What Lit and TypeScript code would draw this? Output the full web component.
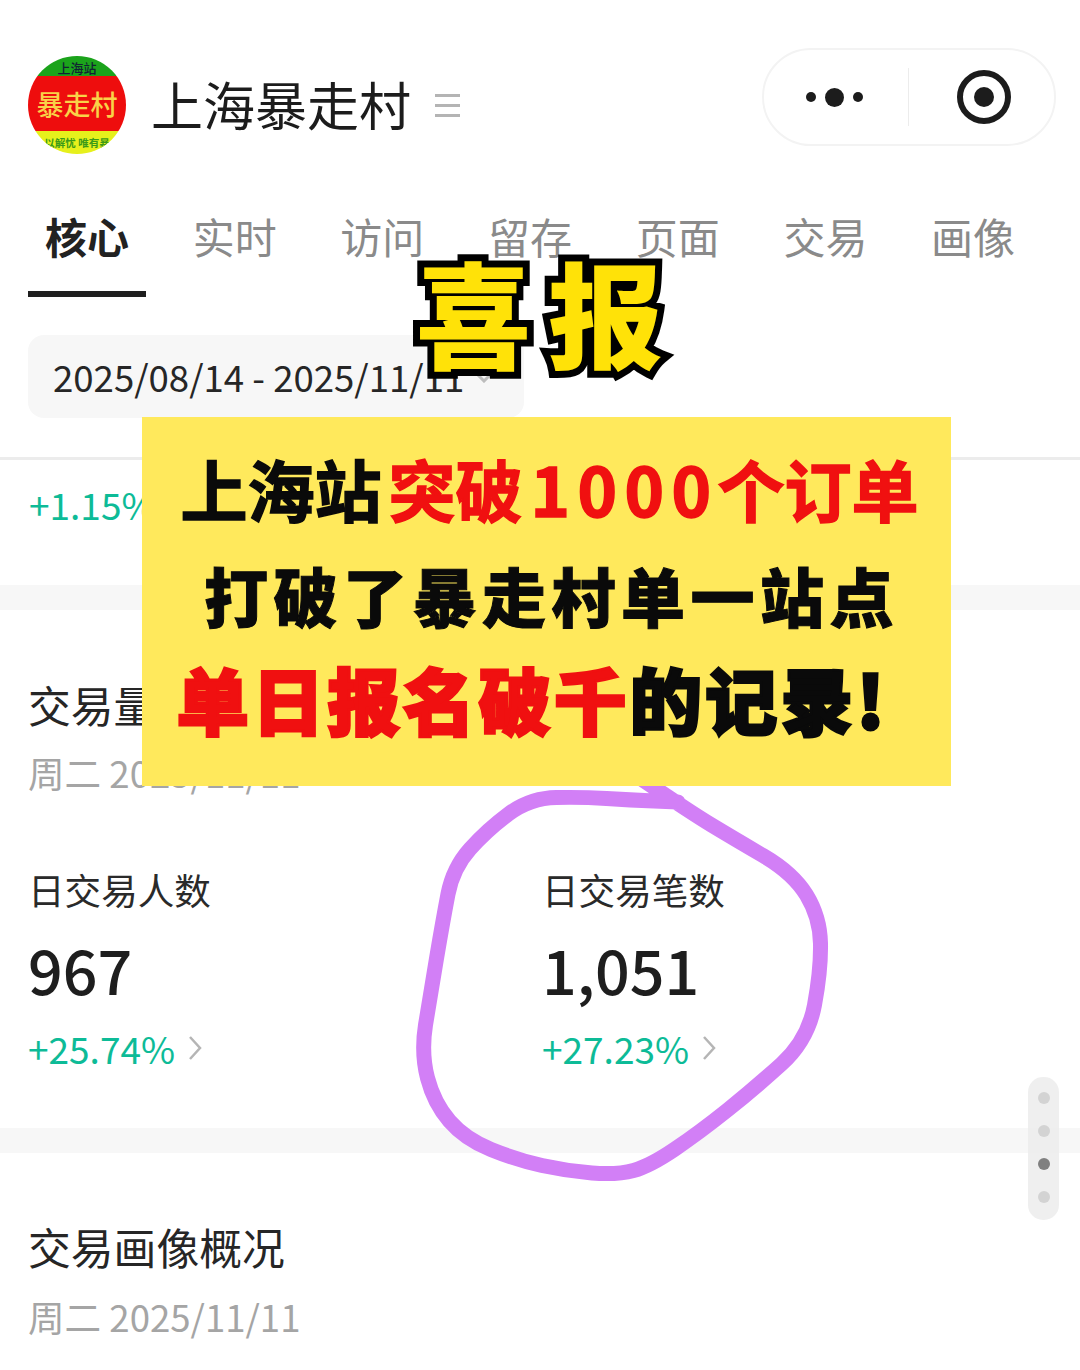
import { LitElement, html, css } from "lit";
import { customElement } from "lit/decorators.js";

const tabs = ["核心", "实时", "访问", "留存", "页面", "交易", "画像"];

const ringPoints: [number, number][] = [
  [640, 778], [690, 812], [733, 838], [793, 873], [820, 917], [821, 970], [808, 1040],
  [755, 1088], [700, 1132], [650, 1166], [617, 1175], [567, 1171], [517, 1160],
  [465, 1139], [434, 1103], [421, 1053], [430, 997], [443, 920], [453, 868],
  [487, 830], [530, 798], [583, 797], [630, 800], [678, 802],
];

function smoothPath(pts: [number, number][]): string {
  let d = `M${pts[0][0]} ${pts[0][1]}`;
  for (let i = 1; i < pts.length - 1; i++) {
    const mx = (pts[i][0] + pts[i + 1][0]) / 2;
    const my = (pts[i][1] + pts[i + 1][1]) / 2;
    d += ` Q${pts[i][0]} ${pts[i][1]} ${mx} ${my}`;
  }
  const last = pts[pts.length - 1];
  return d + ` L${last[0]} ${last[1]}`;
}

@customElement("app-root")
export class AppRoot extends LitElement {
  static styles = css`
    :host {
      display: block;
      position: relative;
      width: 1080px;
      height: 1370px;
      overflow: hidden;
      background: #fff;
      color: #222;
      font-family: "Noto Sans CJK SC", "Noto Sans", sans-serif;
    }
    .header {
      display: flex;
      align-items: center;
      height: 98px;
      margin-top: 48px;
      padding: 0 24px 0 28px;
    }
    .avatar {
      width: 98px;
      height: 98px;
      margin-top: 16px;
      border-radius: 50%;
      overflow: hidden;
      display: flex;
      flex-direction: column;
      flex: none;
      text-align: center;
      white-space: nowrap;
    }
    .av-top {
      height: 20px;
      background: #1ba31b;
      color: #123;
      font-size: 13px;
      line-height: 24px;
      font-weight: 500;
    }
    .av-mid {
      height: 55px;
      background: #ee0d0d;
      color: #f9d248;
      font-size: 27px;
      line-height: 55px;
      font-weight: 500;
    }
    .av-bot {
      height: 23px;
      background: #e6f01c;
      color: #3b9a18;
      font-size: 10.5px;
      line-height: 23px;
      font-weight: 700;
    }
    .title {
      margin: 14px 0 0 25px;
      font-size: 52px;
      line-height: 60px;
      color: #1c1c1c;
      white-space: nowrap;
    }
    .menu {
      margin: 16px 0 0 24px;
      width: 25px;
      display: flex;
      flex-direction: column;
      gap: 7px;
    }
    .menu i {
      display: block;
      height: 3px;
      background: #b4b4b4;
    }
    .capsule {
      margin-left: auto;
      width: 294px;
      height: 98px;
      box-sizing: border-box;
      border: 2px solid #f3f3f3;
      border-radius: 49px;
      display: grid;
      grid-template-columns: 146px 1fr;
      align-items: center;
      position: relative;
    }
    .dots {
      display: flex;
      align-items: center;
      justify-content: center;
      gap: 9px;
      margin-left: -5px;
    }
    .dots i {
      display: block;
      width: 10px;
      height: 10px;
      border-radius: 50%;
      background: #1c1c1c;
    }
    .dots i.big {
      width: 19px;
      height: 19px;
    }
    .target {
      justify-self: center;
      display: block;
      margin-left: 4px;
    }
    .sep {
      position: absolute;
      left: 144px;
      top: 18px;
      width: 1px;
      height: 58px;
      background: #ececec;
    }
    .tabs {
      display: grid;
      grid-template-columns: repeat(7, 147.7px);
      margin-top: 59px;
      padding-left: 13px;
      height: 90px;
    }
    .tab {
      font-size: 42px;
      line-height: 62px;
      text-align: center;
      color: #8a8a8a;
      width: 118px;
      position: relative;
      margin-left: 15px;
      box-sizing: border-box;
      white-space: nowrap;
    }
    .tab.on {
      color: #222;
      font-weight: 700;
    }
    .tab.on::after {
      content: "";
      position: absolute;
      left: 0;
      right: 0;
      top: 86px;
      height: 6px;
      background: #1f1f1f;
    }
    .date {
      margin: 40px 0 0 28px;
      width: 496px;
      height: 83px;
      border-radius: 16px;
      background: #f7f7f7;
      box-sizing: border-box;
      padding-left: 25px;
      display: flex;
      align-items: center;
      gap: 10px;
      font-size: 36.6px;
      color: #262626;
      white-space: nowrap;
    }
    .shadow {
      margin-top: 39px;
      height: 3px;
      background: #ececec;
    }
    .pct {
      display: flex;
      align-items: center;
      gap: 13px;
      color: #0dbb97;
      font-size: 37px;
      line-height: 48px;
      white-space: nowrap;
    }
    .first {
      margin: 20px 0 0 29px;
    }
    .band {
      height: 25px;
      background: #f7f7f7;
    }
    .b1 {
      margin-top: 57px;
    }
    .section {
      padding: 69px 28px 0;
    }
    .h2 {
      font-size: 42.8px;
      line-height: 50px;
      color: #262626;
      white-space: nowrap;
    }
    .sub {
      margin-top: 19px;
      font-size: 36.6px;
      line-height: 50px;
      color: #a5a5a5;
      white-space: nowrap;
    }
    .metrics {
      display: grid;
      grid-template-columns: 514px 1fr;
      margin-top: 70px;
    }
    .m-label {
      font-size: 36.6px;
      line-height: 44px;
      color: #2a2a2a;
      white-space: nowrap;
    }
    .m-value {
      font-size: 61px;
      line-height: 70px;
      margin-top: 22px;
      color: #1e1e1e;
      font-weight: 500;
    }
    .m-pct {
      margin-top: 20px;
    }
    .b2 {
      margin-top: 56px;
    }
    .sec2 {
      padding-top: 68px;
    }
    .sec2 .sub {
      margin-top: 21px;
    }
    .scroll {
      position: absolute;
      left: 1028px;
      top: 1077px;
      width: 31px;
      height: 143px;
      border-radius: 15px;
      background: rgba(236, 236, 236, 0.85);
      display: flex;
      flex-direction: column;
      align-items: center;
      gap: 21px;
      padding-top: 15px;
      box-sizing: border-box;
    }
    .scroll i {
      display: block;
      width: 12px;
      height: 12px;
      border-radius: 50%;
      background: #d3d3d3;
    }
    .scroll i.cur {
      background: #808080;
    }
    .ring {
      position: absolute;
      left: 0;
      top: 0;
      pointer-events: none;
    }
    .headline {
      position: absolute;
      left: 416px;
      top: 225px;
      font-size: 115px;
      line-height: 170px;
      font-weight: 900;
      letter-spacing: 17px;
      color: #ffe208;
      -webkit-text-stroke: 14px #000;
      paint-order: stroke fill;
      white-space: nowrap;
    }
    .banner {
      position: absolute;
      left: 142px;
      top: 417px;
      width: 809px;
      height: 369px;
      background: #ffe95c;
      display: flex;
      flex-direction: column;
      align-items: center;
      padding-top: 18px;
      box-sizing: border-box;
      color: #0a0a0a;
      font-weight: 900;
      white-space: nowrap;
    }
    .l {
      font-size: 67px;
      line-height: 105px;
      -webkit-text-stroke: 1px currentColor;
    }
    .l1 {
      margin-left: 6px;
      font-weight: 700;
      -webkit-text-stroke: 1.5px currentColor;
    }
    .digits {
      letter-spacing: 7.5px;
      margin: 0 -1px 0 8px;
    }
    .gap {
      margin-left: 7px;
    }
    .l2 {
      letter-spacing: 5.5px;
      font-size: 64px;
      margin: 2px 0 -2px 10px;
    }
    .l3 {
      font-size: 72px;
      letter-spacing: 3.5px;
      -webkit-text-stroke: 3px currentColor;
      margin-left: -28px;
    }
    .red {
      color: #f01010;
    }
  `;

  render() {
    return html`
      <div class="header">
        <div class="avatar">
          <div class="av-top">上海站</div>
          <div class="av-mid">暴走村</div>
          <div class="av-bot">以解忧 唯有暴</div>
        </div>
        <div class="title">上海暴走村</div>
        <div class="menu"><i></i><i></i><i></i></div>
        <div class="capsule">
          <div class="dots"><i></i><i class="big"></i><i></i></div>
          <div class="sep"></div>
          <svg class="target" width="54" height="54" viewBox="0 0 54 54">
            <circle cx="27" cy="27" r="24" fill="none" stroke="#1c1c1c" stroke-width="6"></circle>
            <circle cx="27" cy="27" r="10" fill="#1c1c1c"></circle>
          </svg>
        </div>
      </div>

      <div class="tabs">
        ${tabs.map((t, i) => html`<div class="tab ${i === 0 ? "on" : ""}">${t}</div>`)}
      </div>

      <div class="date">
        <span>2025/08/14 - 2025/11/11</span>
        <svg width="20" height="12" viewBox="0 0 20 12">
          <path d="M2 2l8 8 8-8" fill="none" stroke="#bdbdbd" stroke-width="3"></path>
        </svg>
      </div>
      <div class="shadow"></div>
      <div class="pct first">+1.15%</div>
      <div class="band b1"></div>

      <div class="section">
        <div class="h2">交易量概况</div>
        <div class="sub">周二 2025/11/11</div>
        <div class="metrics">
          <div>
            <div class="m-label">日交易人数</div>
            <div class="m-value">967</div>
            <div class="pct m-pct">
              <span>+25.74%</span>
              <svg width="14" height="26" viewBox="0 0 14 26"><path d="M2 2l10 11L2 24" fill="none" stroke="#b5b5b5" stroke-width="2.5"></path></svg>
            </div>
          </div>
          <div>
            <div class="m-label">日交易笔数</div>
            <div class="m-value">1,051</div>
            <div class="pct m-pct">
              <span>+27.23%</span>
              <svg width="14" height="26" viewBox="0 0 14 26"><path d="M2 2l10 11L2 24" fill="none" stroke="#b5b5b5" stroke-width="2.5"></path></svg>
            </div>
          </div>
        </div>
      </div>
      <div class="band b2"></div>

      <div class="section sec2">
        <div class="h2">交易画像概况</div>
        <div class="sub">周二 2025/11/11</div>
      </div>

      <div class="scroll"><i></i><i></i><i class="cur"></i><i></i></div>

      <svg class="ring" width="1080" height="1370" viewBox="0 0 1080 1370">
        <path d=${smoothPath(ringPoints)} fill="none" stroke="#d27ff6" stroke-width="15" stroke-linecap="round" stroke-linejoin="round"></path>
      </svg>

      <div class="banner">
        <div class="l l1">上海站<span class="red gap">突破<span class="digits">1000</span>个订单</span></div>
        <div class="l l2">打破了暴走村单一站点</div>
        <div class="l l3"><span class="red">单日报名破千</span>的记录!</div>
      </div>

      <div class="headline">喜报</div>
    `;
  }
}
